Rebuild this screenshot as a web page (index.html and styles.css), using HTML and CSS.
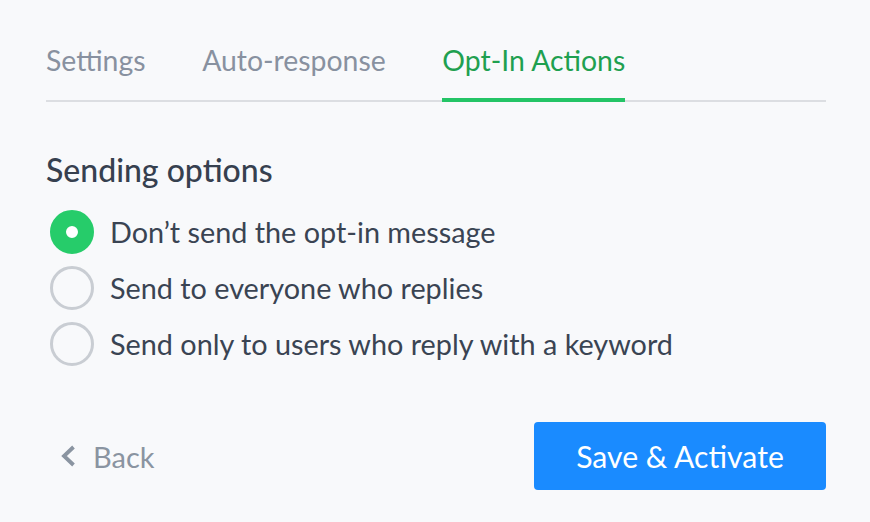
FILE: index.html
```html
<!DOCTYPE html>
<html>
<head>
<meta charset="utf-8">
<link rel="stylesheet" href="styles.css">
</head>
<body>
<div class="panel">
  <nav class="tabs">
    <div class="tab">Settings</div>
    <div class="tab">Auto-response</div>
    <div class="tab active">Opt-In Actions</div>
  </nav>
  <section class="options">
    <h2 class="heading">Sending options</h2>
    <div class="radio-list">
      <label class="radio-row"><span class="radio checked"></span><span class="label">Don’t send the opt-in message</span></label>
      <label class="radio-row"><span class="radio"></span><span class="label">Send to everyone who replies</span></label>
      <label class="radio-row"><span class="radio"></span><span class="label">Send only to users who reply with a keyword</span></label>
    </div>
  </section>
  <footer class="actions">
    <a class="back">
      <svg class="chev" width="16" height="22" viewBox="0 0 16 22"><path d="M13.5 2 L4 11 L13.5 20" fill="none" stroke="#8a94a1" stroke-width="3.8" stroke-linecap="butt" stroke-linejoin="miter"/></svg>
      <span>Back</span>
    </a>
    <button class="primary">Save &amp; Activate</button>
  </footer>
</div>
</body>
</html>
```
FILE: styles.css
```css
html, body {
  margin: 0;
  padding: 0;
  background: #f8f9fb;
}
body {
  font-family: "Lato", "Liberation Sans", sans-serif;
  width: 870px;
  height: 522px;
  overflow: hidden;
}
.panel {
  padding: 0 44px 0 46px;
}
.tabs {
  display: flex;
  gap: 56.6px;
  border-bottom: 2px solid #dcdee2;
  padding-top: 40px;
}
.tab {
  font-size: 28.4px;
  color: #8891a0;
  padding-bottom: 18px;
  line-height: 40px;
  border-bottom: 4px solid transparent;
  margin-bottom: -2px;
}
.tab.active {
  color: #1fa050;
  border-bottom-color: #24c466;
}
.options {
  padding-top: 50px;
}
.heading {
  margin: 0 0 22px;
  font-size: 32px;
  font-weight: 500;
  color: #36404f;
  line-height: 36px;
}
.radio-list {
  display: flex;
  flex-direction: column;
  gap: 12px;
}
.radio-row {
  display: flex;
  align-items: center;
  gap: 16px;
  height: 44px;
  padding-left: 4px;
}
.radio {
  width: 44px;
  height: 44px;
  box-sizing: border-box;
  border-radius: 50%;
  border: 3px solid #c9cdd3;
  background: #f8f9fb;
  flex: none;
}
.radio.checked {
  border: 16px solid #26cc6a;
  background: #ffffff;
}
.label {
  font-size: 28.8px;
  color: #3a4453;
}
.actions {
  margin-top: 56px;
  display: flex;
  justify-content: space-between;
  align-items: center;
}
.back {
  display: flex;
  align-items: center;
  gap: 17px;
  padding-left: 14px;
  font-size: 29px;
  color: #8a94a1;
}
.chev {
  flex: none;
  display: block;
}
.primary {
  width: 292px;
  height: 68px;
  background: #1a8bff;
  color: #ffffff;
  border: none;
  border-radius: 4px;
  font-family: "Lato", "Liberation Sans", sans-serif;
  font-size: 30.2px;
}
```
